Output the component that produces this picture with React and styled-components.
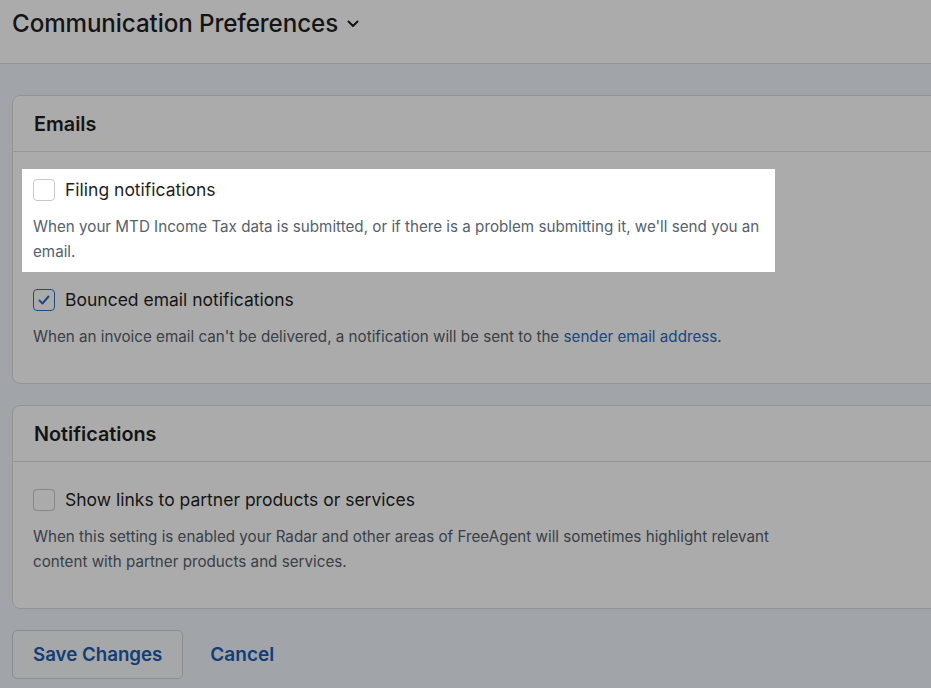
import React from 'react'
import styled, { createGlobalStyle } from 'styled-components'

const GlobalStyle = createGlobalStyle`
  html, body {
    margin: 0;
    padding: 0;
    background: #f0f5fc;
  }
  body {
    font-family: Inter, "Noto Sans", sans-serif;
    color: #1f1f1f;
  }
`

const Page = styled.div`
  min-height: 688px;
  overflow: hidden;
`

const TopBar = styled.header`
  height: 64px;
  box-sizing: border-box;
  padding: 9px 12px 0;
  background: #fff;
  border-bottom: 1px solid #dcdfe3;
  display: flex;
  align-items: flex-start;
`

const Title = styled.h1`
  margin: 0;
  font-size: 24.2px;
  line-height: 30px;
  font-weight: 500;
  display: flex;
  align-items: center;
  gap: 9px;
  letter-spacing: -0.1px;
`

const Main = styled.main`
  padding: 31px 0 30px 12px;
  display: flex;
  flex-direction: column;
  gap: 21px;
`

const Card = styled.section`
  background: #fff;
  border: 1px solid #d8dce2;
  border-radius: 8px;
  margin-right: -30px;
`

const CardHeader = styled.h2`
  margin: 0;
  height: 55px;
  padding: 0 21px;
  display: flex;
  align-items: center;
  font-size: 19.8px;
  font-weight: 600;
  border-bottom: 1px solid #dde1e6;
`

const CardBody = styled.div`
  padding: 17px 9px 26px;
  display: flex;
  flex-direction: column;
  gap: 7px;
`

const Item = styled.div`
  padding: 10px 11px 8px;
  width: ${p => (p.$highlight ? '753px' : 'auto')};
  box-sizing: border-box;
  ${p =>
    p.$highlight &&
    `
    position: relative;
    z-index: 5;
    background: #fff;
    box-shadow: 0 0 0 3000px rgba(0, 0, 0, 0.33);
  `}
`

const CheckRow = styled.label`
  display: flex;
  align-items: center;
  gap: 10px;
  font-size: 17.5px;
  line-height: 22px;
`

const Box = styled.span`
  width: 22px;
  height: 22px;
  box-sizing: border-box;
  border-radius: 4px;
  border: 1px solid ${p => (p.$checked ? '#2e6fc0' : '#c4c9d0')};
  background: #fff;
  display: flex;
  align-items: center;
  justify-content: center;
  flex-shrink: 0;
`

const Desc = styled.p`
  margin: 13px 0 0;
  max-width: 770px;
  font-size: 15.2px;
  line-height: 25px;
  color: #56616c;
`

const Link = styled.a`
  color: #2a6bc0;
  text-decoration: none;
`

const Actions = styled.div`
  display: flex;
  align-items: center;
  gap: 27px;
`

const SaveButton = styled.button`
  height: 49px;
  padding: 0 20px;
  border: 1px solid #cdd1d7;
  border-radius: 5px;
  background: #f8f9fb;
  color: #1a5cb5;
  font-family: inherit;
  font-size: 18.7px;
  font-weight: 600;
`

const CancelLink = styled.a`
  color: #1a5cb5;
  font-size: 19px;
  font-weight: 600;
  text-decoration: none;
`

const Checkbox = ({ checked }) => (
  <Box $checked={checked}>
    {checked && (
      <svg width="16" height="16" viewBox="0 0 16 16">
        <polyline
          points="3.5,8.5 6.5,11.5 12.5,4.5"
          fill="none"
          stroke="#2e6fc0"
          strokeWidth="2"
          strokeLinecap="round"
          strokeLinejoin="round"
        />
      </svg>
    )}
  </Box>
)

const Chevron = () => (
  <svg width="12" height="8" viewBox="0 0 12 8">
    <polyline
      points="1.5,1.5 6,6 10.5,1.5"
      fill="none"
      stroke="#1f1f1f"
      strokeWidth="2"
      strokeLinecap="round"
      strokeLinejoin="round"
    />
  </svg>
)

const App = () => {
  return (
    <Page>
      <GlobalStyle />
      <TopBar>
        <Title>
          Communication Preferences <Chevron />
        </Title>
      </TopBar>
      <Main>
        <Card>
          <CardHeader>Emails</CardHeader>
          <CardBody>
            <Item $highlight>
              <CheckRow>
                <Checkbox />
                Filing notifications
              </CheckRow>
              <Desc>
                When your MTD Income Tax data is submitted, or if there is a problem submitting it,
                we'll send you an email.
              </Desc>
            </Item>
            <Item>
              <CheckRow>
                <Checkbox checked />
                Bounced email notifications
              </CheckRow>
              <Desc>
                When an invoice email can't be delivered, a notification will be sent to the{' '}
                <Link href="#">sender email address</Link>.
              </Desc>
            </Item>
          </CardBody>
        </Card>
        <Card>
          <CardHeader>Notifications</CardHeader>
          <CardBody>
            <Item>
              <CheckRow>
                <Checkbox />
                Show links to partner products or services
              </CheckRow>
              <Desc>
                When this setting is enabled your Radar and other areas of FreeAgent will sometimes
                highlight relevant content with partner products and services.
              </Desc>
            </Item>
          </CardBody>
        </Card>
        <Actions>
          <SaveButton>Save Changes</SaveButton>
          <CancelLink href="#">Cancel</CancelLink>
        </Actions>
      </Main>
    </Page>
  )
}

export default App
